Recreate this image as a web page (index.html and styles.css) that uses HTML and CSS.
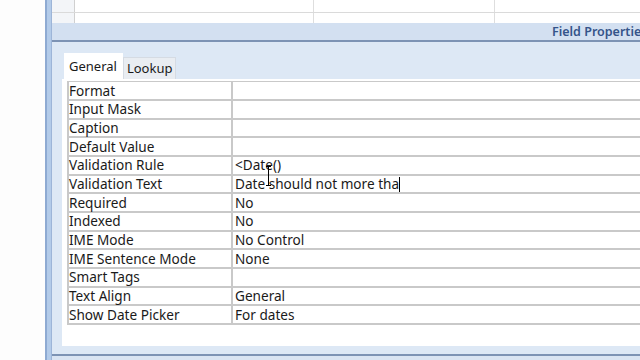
FILE: index.html
```html
<!DOCTYPE html>
<html lang="en">
<head>
<meta charset="UTF-8"/>
<title>Table Design | Field Properties</title>
<link rel="stylesheet" href="styles.css">
</head>
<body>
<div class="gutter"></div>
<div class="frame"></div>

<!-- ─── DESIGN AREA ───────────────────────────────────────────────────── -->
<main class="main">
  <div class="fields">
    <div class="row"><span class="sel"></span><span class="c1"></span><span class="c2"></span><span class="c3"></span></div>
    <div class="row"><span class="sel"></span><span class="c1"></span><span class="c2"></span><span class="c3"></span></div>
  </div>

  <div class="props-head"><span>Field Properties</span></div>

  <section class="props">
    <div class="tabs">
      <span class="tab on">General</span>
      <span class="tab">Lookup</span>
    </div>
    <div class="sheet">
      <table class="plist">
        <tr><td>Format</td><td></td></tr>
        <tr><td>Input Mask</td><td></td></tr>
        <tr><td>Caption</td><td></td></tr>
        <tr><td>Default Value</td><td></td></tr>
        <tr><td>Validation Rule</td><td>&lt;Date()</td></tr>
        <tr><td>Validation Text</td><td class="edit">Date should not more tha<i class="caret"></i></td></tr>
        <tr><td>Required</td><td>No</td></tr>
        <tr><td>Indexed</td><td>No</td></tr>
        <tr><td>IME Mode</td><td>No Control</td></tr>
        <tr><td>IME Sentence Mode</td><td>None</td></tr>
        <tr><td>Smart Tags</td><td></td></tr>
        <tr><td>Text Align</td><td>General</td></tr>
        <tr><td>Show Date Picker</td><td>For dates</td></tr>
      </table>
      <span class="ibeam"></span>
    </div>
  </section>
  <div class="foot"></div>
</main>
</body>
</html>
```

FILE: styles.css
```css
:root{
  --band:#d3e0f1;--panel:#dde8f5;--line:#c9c9c9;--edge:#7d93b4;
  --text:#1a1a1a;--title:#35548a;
}
*,*::before,*::after{box-sizing:border-box;margin:0;padding:0}
body{width:640px;height:360px;overflow:hidden;display:flex;background:#fff;
  font-family:"Noto Sans","Open Sans",sans-serif;font-size:12px;color:var(--text)}

/* ─── WINDOW EDGE ───────────────────────────────────────────────────── */
.gutter{width:45px;flex:none;background:#fdfdfd}
.frame{width:7px;flex:none;background:#b3cbe9;border-left:2px solid #8eaad2;border-right:1px solid #9db5d8}

.main{flex:1;min-width:0;display:flex;flex-direction:column;background:var(--panel)}

/* ─── FIELD GRID (top) ──────────────────────────────────────────────── */
.fields{height:23px;background:#fff;overflow:hidden}
.row{display:flex;height:13px;border-bottom:1px solid #dadada}
.row span{display:block;height:100%;border-right:1px solid #dedede}
.sel{width:23px;background:#f3f5f8;border-right-color:#d0d0d0!important}
.c1{width:239px}
.c2{width:181px}
.c3{flex:1;border-right:none!important}

/* ─── FIELD PROPERTIES BAND ─────────────────────────────────────────── */
.props-head{height:19px;background:var(--band);border-bottom:2px solid var(--edge);
  padding-left:500px;white-space:nowrap;overflow:hidden;
  font-size:12.5px;font-weight:600;color:var(--title);line-height:18px}

.props{flex:1;display:flex;flex-direction:column;padding:10px 0 8px 10px;min-height:0}
.tabs{display:flex;align-items:flex-end;height:27px;padding-left:2px}
.tab{display:block;padding:0 3px 0 3px;font-size:13px;line-height:21px;background:#e9edf2;
  border:1px solid #d5dbe3;border-bottom:none}
.tab.on{background:#fff;line-height:25px;border-color:#fff;padding:0 5px 0 4px}

.sheet{flex:1;background:#fff;padding:2px 0 0 5px;position:relative}
.plist{border-collapse:collapse;width:600px;border:2px solid var(--line);border-top:1px solid var(--line)}
.plist td{height:18.65px;border:1px solid var(--line);border-width:0 0 2px 0;padding:0;
  font-size:13.6px;line-height:16px;white-space:nowrap;vertical-align:middle}
.plist td:first-child{width:164px;border-right:2px solid var(--line)}
.plist td:last-child{padding-left:2px}
.caret{display:inline-block;width:1px;height:15px;background:#000;vertical-align:-3px}

/* mouse I-beam over the value column */
.ibeam{position:absolute;left:206px;top:87px;width:1px;height:20px;background:#000}
.ibeam::before,.ibeam::after{content:"";position:absolute;left:-2px;width:5px;height:1px;background:#000}
.ibeam::before{top:0}
.ibeam::after{bottom:0}

.foot{height:6px;border-top:2px solid var(--edge);background:#d9e4f2}
```
